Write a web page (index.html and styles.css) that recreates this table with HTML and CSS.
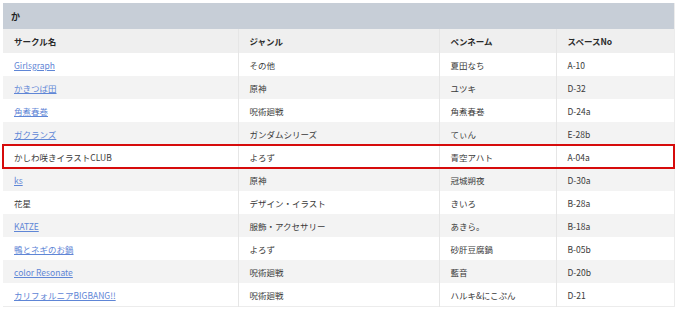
FILE: index.html
```html
<!DOCTYPE html>
<html lang="ja">
<head>
<meta charset="utf-8">
<link rel="stylesheet" href="styles.css">
</head>
<body>
<table class="list">
  <colgroup>
    <col class="c1"><col class="c2"><col class="c3"><col class="c4">
  </colgroup>
  <thead>
    <tr class="group"><th colspan="4">か</th></tr>
    <tr class="head"><th>サークル名</th><th>ジャンル</th><th>ペンネーム</th><th>スペースNo</th></tr>
  </thead>
  <tbody>
    <tr><td><a href="#">Girlsgraph</a></td><td>その他</td><td>夏田なち</td><td>A-10</td></tr>
    <tr><td><a href="#">かきつば田</a></td><td>原神</td><td>ユツキ</td><td>D-32</td></tr>
    <tr><td><a href="#">角煮春巻</a></td><td>呪術廻戦</td><td>角煮春巻</td><td>D-24a</td></tr>
    <tr><td><a href="#">ガクランズ</a></td><td>ガンダムシリーズ</td><td>てぃん</td><td>E-28b</td></tr>
    <tr class="mark"><td>かしわ咲きイラストCLUB</td><td>よろず</td><td>青空アハト</td><td>A-04a</td></tr>
    <tr><td><a href="#">ks</a></td><td>原神</td><td>冠城朔夜</td><td>D-30a</td></tr>
    <tr><td>花星</td><td>デザイン・イラスト</td><td>きいろ</td><td>B-28a</td></tr>
    <tr><td><a href="#">KATZE</a></td><td>服飾・アクセサリー</td><td>あきら。</td><td>B-18a</td></tr>
    <tr><td><a href="#">鴨とネギのお鍋</a></td><td>よろず</td><td>砂肝豆腐鍋</td><td>B-05b</td></tr>
    <tr><td><a href="#">color Resonate</a></td><td>呪術廻戦</td><td>藍音</td><td>D-20b</td></tr>
    <tr><td><a href="#">カリフォルニアBIGBANG!!</a></td><td>呪術廻戦</td><td>ハルキ&amp;にこぷん</td><td>D-21</td></tr>
  </tbody>
</table>
</body>
</html>
```

FILE: styles.css
```css
html, body {
  margin: 0;
  background: #ffffff;
}
body {
  padding: 3px;
  font-family: "Noto Sans CJK JP", "Noto Sans", sans-serif;
  font-size: 8.5px;
  color: #3a3a3a;
}
.list {
  width: 671px;
  border-collapse: collapse;
  table-layout: fixed;
  border-right: 1px solid #ececec;
  border-bottom: 1px solid #ececec;
}
.c1 { width: 235px; }
.c2 { width: 201px; }
.c3 { width: 117px; }
.c4 { width: 118px; }
.list th, .list td {
  text-align: left;
  padding: 0 0 0 11px;
  white-space: nowrap;
  overflow: hidden;
}
.list td + td, .list .head th + th {
  border-left: 1px solid #e6e6e6;
}
.group th {
  height: 26px;
  background: #c7ced7;
  font-weight: 700;
  font-size: 9px;
  padding-left: 8px;
  color: #222;
}
.head th {
  height: 24px;
  background: #efefef;
  font-weight: 700;
  color: #2a2a2a;
}
.list tbody td {
  height: 23px;
}
.list tbody tr:nth-child(even) td {
  background: #f3f3f3;
}
.list a {
  color: #5f86d6;
  text-decoration: underline;
}
.mark {
  outline: 2px solid #d60b0b;
  outline-offset: -1px;
}
```
